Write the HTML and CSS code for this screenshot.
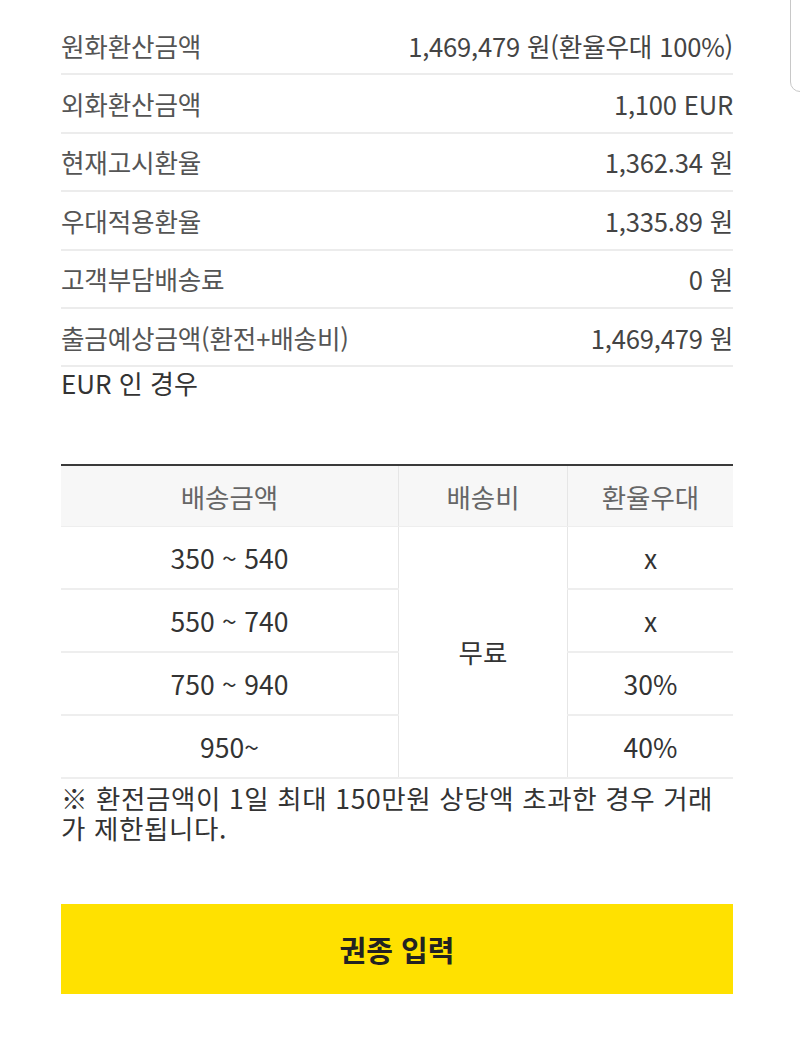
FILE: index.html
```html
<!DOCTYPE html>
<html lang="ko">
<head>
<meta charset="utf-8">
<link rel="stylesheet" href="styles.css">
</head>
<body>
<div class="scroll-edge"></div>
<main class="page">
  <section class="summary">
    <div class="row"><span class="label">원화환산금액</span><span class="value">1,469,479 원(환율우대 100%)</span></div>
    <div class="row"><span class="label">외화환산금액</span><span class="value">1,100 EUR</span></div>
    <div class="row"><span class="label">현재고시환율</span><span class="value">1,362.34 원</span></div>
    <div class="row"><span class="label">우대적용환율</span><span class="value">1,335.89 원</span></div>
    <div class="row"><span class="label">고객부담배송료</span><span class="value">0 원</span></div>
    <div class="row"><span class="label">출금예상금액(환전+배송비)</span><span class="value">1,469,479 원</span></div>
  </section>
  <p class="subtitle">EUR 인 경우</p>
  <table class="fee">
    <thead>
      <tr><th class="c1">배송금액</th><th class="c2">배송비</th><th class="c3">환율우대</th></tr>
    </thead>
    <tbody>
      <tr><td>350 ~ 540</td><td class="free" rowspan="4">무료</td><td>x</td></tr>
      <tr><td>550 ~ 740</td><td>x</td></tr>
      <tr><td>750 ~ 940</td><td>30%</td></tr>
      <tr><td>950~</td><td>40%</td></tr>
    </tbody>
  </table>
  <p class="note">※ 환전금액이 1일 최대 150만원 상당액 초과한 경우 거래가 제한됩니다.</p>
  <button class="submit">권종 입력</button>
</main>
</body>
</html>
```

FILE: styles.css
```css
html, body {
  margin: 0;
  padding: 0;
  background: #ffffff;
}
body {
  font-family: "Noto Sans CJK KR", "Noto Sans", sans-serif;
  color: #333;
}
.scroll-edge {
  position: absolute;
  top: -10px;
  right: -12px;
  width: 20px;
  height: 100px;
  border: 1px solid #c8c8c8;
  border-radius: 10px;
}
.page {
  width: 672px;
  margin-left: 61px;
  padding-top: 17px;
}
.summary .row {
  display: flex;
  justify-content: space-between;
  align-items: center;
  height: 56.4px;
  border-bottom: 2px solid #ececec;
  font-size: 25.6px;
  letter-spacing: -0.2px;
  color: #555;
}
.summary .value {
  color: #444;
}
.subtitle {
  margin: 0;
  font-size: 26px;
  line-height: 32px;
  color: #333;
}
.fee {
  width: 100%;
  margin-top: 65px;
  border-collapse: collapse;
  border-top: 2px solid #3a3a3a;
  font-size: 26.5px;
}
.fee th {
  height: 60px;
  background: #f7f7f7;
  color: #666;
  font-weight: normal;
  border-left: 1px solid #e6e6e6;
  border-bottom: 1px solid #eeeeee;
  padding: 0;
}
.fee th:first-child { border-left: none; }
.fee .c1 { width: 337px; }
.fee .c2 { width: 168px; }
.fee td {
  height: 61px;
  text-align: center;
  padding: 0;
  color: #333;
  border-bottom: 2px solid #eeeeee;
}
.fee td.free {
  border-left: 1px solid #e6e6e6;
  border-right: 1px solid #e6e6e6;
  padding-bottom: 2px;
}
.note {
  margin: 4px 0 0;
  font-size: 26.5px;
  line-height: 30px;
  letter-spacing: 0.6px;
  color: #333;
}
.submit {
  display: block;
  width: 100%;
  height: 90px;
  margin-top: 61px;
  border: none;
  background: #ffe100;
  font-family: "Noto Sans CJK KR", sans-serif;
  font-size: 29px;
  font-weight: bold;
  color: #222;
}
```
